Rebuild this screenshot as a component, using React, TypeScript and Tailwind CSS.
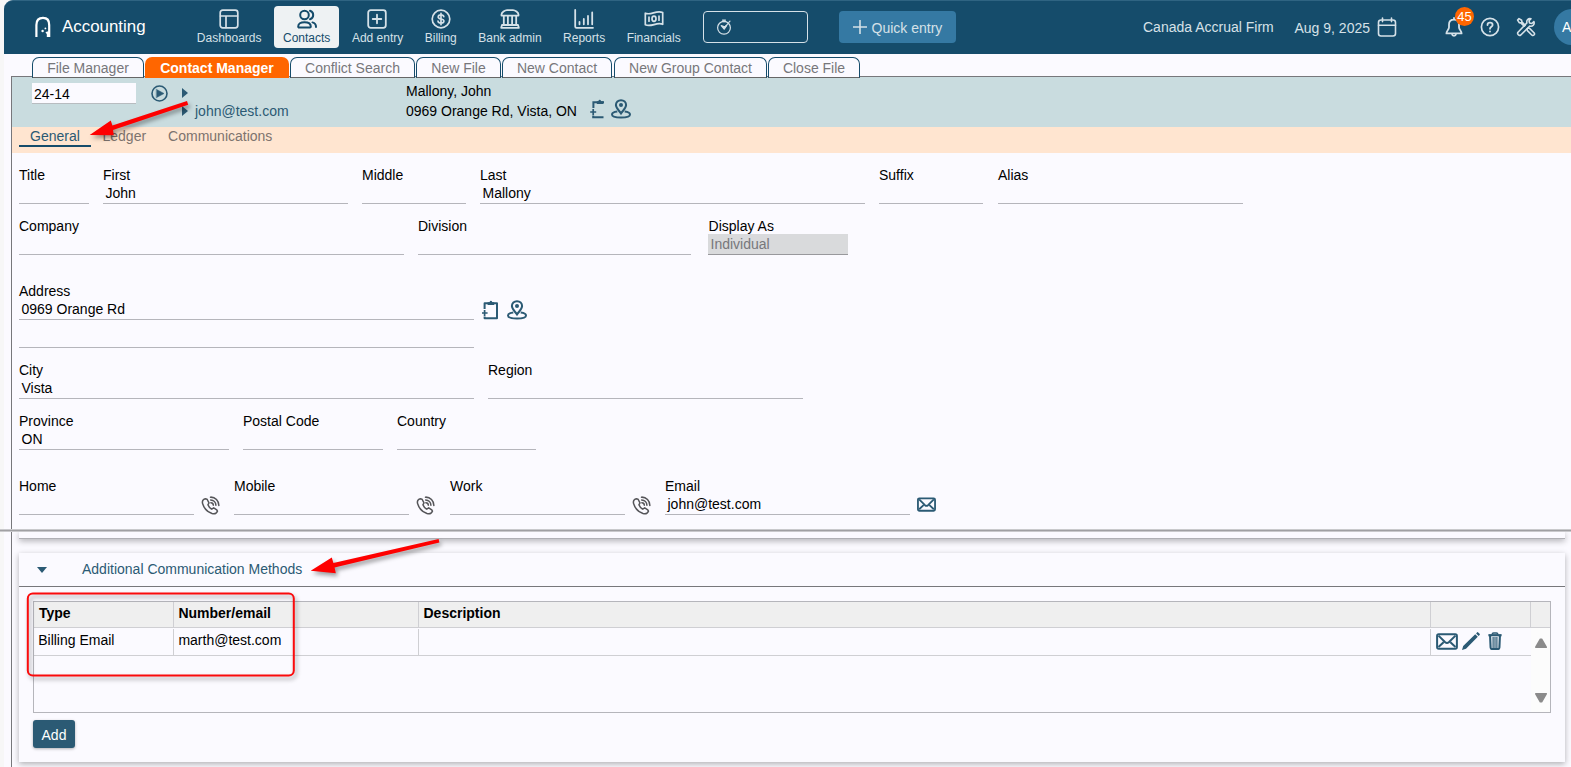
import React from "react";

type IconProps = { className?: string };

const Svg = ({ className, children, box = 20, w = 1.7 }: IconProps & { children: React.ReactNode; box?: number; w?: number }) => (
  <svg viewBox={`0 0 ${box} ${box}`} className={`shrink-0 ${className ?? ""}`} fill="none" stroke="currentColor" strokeWidth={w} strokeLinecap="round" strokeLinejoin="round">
    {children}
  </svg>
);

const DashboardIcon = () => (
  <Svg className="size-5"><rect x="1.2" y="1.2" width="17.6" height="17.6" rx="2.5" /><path d="M1.5 7H18.5M7 7V18.5" /></Svg>
);
const ContactsIcon = () => (
  <Svg className="size-5" w={2}>
    <circle cx="7.5" cy="6" r="4.3" />
    <path d="M1.2 17.6C1.2 14.6 3.6 13.2 7.5 13.2S13.8 14.6 13.8 17.6C13.8 18.2 13.4 18.6 12.9 18.6H2.1C1.6 18.6 1.2 18.2 1.2 17.6Z" />
    <path d="M13 1.8C15 2.4 16.2 4 16.2 6S15 9.6 13 10.2M15.5 13.4C17.8 14 19 15.6 19 18" />
  </Svg>
);
const AddIcon = () => (
  <Svg className="-ml-px size-5" w={1.8}><rect x="1.2" y="1.2" width="17.6" height="17.6" rx="2.5" /><path d="M10 5.7V14.3M5.7 10H14.3" /></Svg>
);
const BillingIcon = () => (
  <Svg className="size-5"><circle cx="10" cy="10" r="8.8" /><path d="M12.8 7.6C12.6 6.3 11.5 5.8 10 5.8S7.2 6.5 7.2 7.9C7.2 10.8 12.9 9.2 12.9 12C12.9 13.5 11.6 14.2 10 14.2S7.2 13.6 7 12.2M10 4.4V15.6" /></Svg>
);
const BankIcon = () => (
  <Svg className="size-5" w={1.8}>
    <path d="M1.5 5.5C1.5 3.5 5 1.2 7 1.2H13C15 1.2 18.5 3.5 18.5 5.5V6.6H1.5ZM2 16H18L18.8 18.8H1.2ZM3.8 7V15.5M7.9 7V15.5M12.1 7V15.5M16.2 7V15.5" />
  </Svg>
);
const ReportsIcon = () => (
  <Svg className="size-5" w={1.8}><path d="M1.2 1V17.5C1.2 18.3 1.7 18.8 2.5 18.8H19M5.5 13V15.3M9.8 10V15.3M14 7V15.3M18.2 3.5V15.3" /></Svg>
);
const FinancialsIcon = () => (
  <Svg className="size-5">
    <path d="M1.3 4.2C7 6.8 12 .8 18.7 3.5V15.3C12.5 12.7 7.5 18.5 1.3 15.8Z" />
    <ellipse cx="10" cy="9.7" rx="2" ry="2.6" /><path d="M5 8.2V12.2M15 7.2V11.2" />
  </Svg>
);
const TimerIcon = () => (
  <Svg className="size-4" box={16} w={1.2}>
    <circle cx="8" cy="8.8" r="6.4" /><path d="M6.5 1.2H9.5M8 1.4V3M12.8 3.4L14 2.2M8 9L12 4.6" />
    <path d="M5.2 6.6L8.6 7.8L10.6 6.6L8.2 10.2Z" fill="currentColor" />
  </Svg>
);
const CalendarIcon = () => (
  <Svg className="size-[20px]" w={1.6}><rect x="1.5" y="3" width="17" height="16" rx="2.5" /><path d="M1.5 8.2H18.5M5.5 1V4.6M14.5 1V4.6" /></Svg>
);
const BellIcon = () => (
  <Svg className="size-[20px]" w={1.8}>
    <path d="M10 2.6C6.6 2.6 5 5 5 7.6V10.2C5 12.8 2.4 13.6 2.4 16.4H17.6C17.6 13.6 15 12.8 15 10.2V7.6C15 5 13.4 2.6 10 2.6ZM8 17.2C8.3 19.4 11.7 19.4 12 17.2M10 1V2.5" />
  </Svg>
);
const HelpIcon = () => (
  <Svg className="size-[20px]"><circle cx="10" cy="10" r="8.6" /><path d="M7.5 8C7.5 4.8 12.6 4.9 12.6 7.9C12.6 9.8 10 9.7 10 11.8M10 14.3V14.5" strokeWidth="1.8" /></Svg>
);
const ToolsIcon = () => (
  <Svg className="size-[20px]" w={1.6}>
    <path d="M1.6 3L3 1.6L5.6 3.2L5.9 4.8L9.2 8.2L8.2 9.2L4.8 5.9L3.2 5.6ZM12 11L13.6 11.4L18.2 16C19.2 17.4 17.4 19.2 16 18.2L11.4 13.6L11 12Z" />
    <path d="M17.9 4.6L15.8 6.5L13.5 5.9L13 3.8L15 1.8C12.3 1 10.2 3.2 10.9 5.9L2 15.2C.8 17 3 19.2 4.8 18L13.8 9C16.5 10 19 7.3 17.9 4.6Z" />
  </Svg>
);
const ClipboardAdd = ({ className }: IconProps) => (
  <svg viewBox="0 0 18 20" className={`h-5 w-[18px] shrink-0 text-[#2b5a74] ${className ?? ""}`} fill="none" stroke="currentColor" strokeWidth="2">
    <path d="M2.6 9V3.2H15V18.2H2.6V16.4" strokeLinejoin="round" /><path d="M-.4 13H5.6M2.6 10V16" strokeWidth="1.7" />
    <path d="M5.6 5V2.2H7.4Q8.9-.6 10.4 2.2H12.2V5Z" fill="currentColor" stroke="none" />
  </svg>
);
const ClipboardPartial = ({ className }: IconProps) => (
  <svg viewBox="0 0 18 20" className={`h-5 w-[18px] shrink-0 text-[#2b5a74] ${className ?? ""}`} fill="none" stroke="currentColor" strokeWidth="2">
    <path d="M3.4 9V3.2H14M3.2 16.4V18.2H13.5" /><path d="M.2 13H6.2M3.2 10V16" strokeWidth="1.7" />
    <path d="M6.8 5V2.2H8.2Q9.7-.6 11.2 2.2H13.4V5Z" fill="currentColor" stroke="none" />
  </svg>
);
const MapPin = ({ className }: IconProps) => (
  <svg viewBox="0 0 20 20" className={`size-5 shrink-0 text-[#2b5a74] ${className ?? ""}`} fill="none" stroke="currentColor" strokeWidth="2">
    <path d="M10 14.4C8 11.4 4.9 9.2 4.9 6.1C4.9 3.1 7.1 1.3 10 1.3S15.1 3.1 15.1 6.1C15.1 9.2 12 11.4 10 14.4Z" />
    <circle cx="10" cy="6" r="2" fill="currentColor" stroke="none" />
    <path d="M6.3 12.4C3.4 12.8 1 13.9 1 15.4C1 17.4 5 18.5 10 18.5S19 17.4 19 15.4C19 13.9 16.6 12.8 13.7 12.4" />
  </svg>
);
const Phone = ({ className }: IconProps) => (
  <Svg className={`size-[19px] text-[#555559] ${className ?? ""}`} w={1.6}>
    <path d="M6.4 3.4L4.5 2.9C2.1 3.4 1 5.4 1.7 8C3 12.7 7 16.8 11.6 18.4C14.2 19.2 16.4 18.2 17.3 16L16.6 14.6L13.4 12.5L11.3 13.8C9.4 12.9 8 11.3 7.3 9.3L8.4 7.2Z" />
    <path d="M10 1.2C15 1 18.9 5 18.8 10M10.2 4.2C13.2 4.4 15.7 6.7 15.7 9.8M10.4 7.1C12 7.2 12.9 8.3 13 9.6" />
  </Svg>
);
const Mail = ({ className, w = 2 }: IconProps & { w?: number }) => (
  <svg viewBox="0 0 22 17" className={`shrink-0 text-[#2b5a74] ${className ?? ""}`} fill="none" stroke="currentColor" strokeWidth={w} strokeLinejoin="round">
    <rect x="1.1" y="1.3" width="19.8" height="14.4" rx="1.6" />
    <path d="M2.5 2.6L9.2 9.3Q11 10.8 12.8 9.3L19.5 2.6M2.5 14L7.6 9.2M19.5 14L14.4 9.2" />
  </svg>
);

const NavItem = ({ label, icon, active }: { label: string; icon: React.ReactNode; active?: boolean }) => (
  <div className={`flex h-[42px] flex-col items-center rounded-[4px] ${active ? "w-[65px] bg-[#eef2f3] text-[#154c6b]" : "px-[8.8px] text-[#d5e1e8]"} pt-[3px]`}>
    {icon}
    <span className="mt-px text-xs leading-4 whitespace-nowrap">{label}</span>
  </div>
);

const Field = ({ label, value, className }: { label: string; value?: string; className: string }) => (
  <div className={`shrink-0 ${className}`}>
    <div className="h-[18px] leading-[18px] whitespace-nowrap">{label}</div>
    <div className="h-5 border-b border-[#b5b5bb] pl-[2.5px] leading-[18px]">{value}</div>
  </div>
);

const Tab = ({ label, className }: { label: string; className: string }) => (
  <div className={`h-[21px] shrink-0 rounded-t-[7px] border border-[#154c6b] border-b-[#666] bg-[#fbfaff] text-center leading-[21px] text-[#77777b] ${className}`}>{label}</div>
);

const Arrows = () => (
  <svg className="pointer-events-none absolute inset-0 h-[767px] w-[1571px]" viewBox="0 0 1571 767">
    <g fill="#fe0000" style={{ filter: "drop-shadow(2px 3px 2px rgba(0,0,0,.38))" }}>
      <path d="M89.7 135L110.8 120.4L112.4 125.4L187 101L188.2 104.8L113 130L113.8 135.2Z" />
      <path d="M310.7 570.8L331.8 557.6L333.4 563L438.6 538.9L439.4 542.5L334.6 567.6L335.8 573.2Z" />
    </g>
    <rect x="27.8" y="593.6" width="266" height="82" rx="5" fill="none" stroke="#fb0a0c" strokeWidth="2" style={{ filter: "drop-shadow(2px 3px 2px rgba(0,0,0,.35))" }} />
  </svg>
);

export default function App() {
  return (
    <div className="relative flex h-[767px] w-[1571px] overflow-hidden bg-[#f7f7f7] pl-1 font-['Liberation_Sans',Arial,sans-serif] text-sm text-black">
      <div className="flex w-[1567px] shrink-0 flex-col rounded-tl-[9px] bg-[#fbfaff]">
        <header className="relative flex h-[54px] shrink-0 items-start overflow-hidden rounded-tl-[9px] border-t border-[#2f6482] bg-[#154c6b] text-[#d5e1e8]">
          <svg viewBox="0 0 16 21" className="mt-[15px] ml-[31px] h-[21px] w-4 shrink-0" fill="none" stroke="#fff" strokeWidth="2.2">
            <path d="M1.4 21V9C1.4 4 3.5 1.9 8 1.9S14.2 4 14.2 9V21" />
            <path d="M11.8 21V18L10.4 16.6L12 15.4H14V21Z" fill="#fff" stroke="none" />
            <circle cx="7.6" cy="15" r="1.2" fill="#fff" stroke="none" /><circle cx="10.4" cy="12.4" r=".9" fill="#fff" stroke="none" />
          </svg>
          <div className="mt-[15px] ml-[11px] w-[126px] shrink-0 text-[16.9px] leading-[22px] text-white">Accounting</div>
          <nav className="mt-[5px] flex w-[511px] shrink-0 gap-[3.9px]">
            <NavItem label="Dashboards" icon={<DashboardIcon />} />
            <NavItem label="Contacts" icon={<ContactsIcon />} active />
            <NavItem label="Add entry" icon={<AddIcon />} />
            <NavItem label="Billing" icon={<BillingIcon />} />
            <NavItem label="Bank admin" icon={<BankIcon />} />
            <NavItem label="Reports" icon={<ReportsIcon />} />
            <NavItem label="Financials" icon={<FinancialsIcon />} />
          </nav>
          <div className="mt-[10px] ml-1 flex h-8 w-[105px] shrink-0 items-center rounded-[4px] border border-[#d5e1e8] pl-3"><TimerIcon /></div>
          <div className="mt-[10px] ml-[31px] flex h-8 w-[117px] shrink-0 items-center rounded-[4px] bg-[#3579a3] pl-[14px]">
            <Svg className="size-[14px]" box={14} w={1.6}><path d="M7 .5V13.5M.5 7H13.5" /></Svg>
            <span className="mt-0.5 ml-[4.5px] leading-4 whitespace-nowrap">Quick entry</span>
          </div>
          <span className="mt-[18px] ml-[187px] w-[151.5px] shrink-0 leading-4 whitespace-nowrap">Canada Accrual Firm</span>
          <span className="mt-[19px] w-[82.5px] shrink-0 leading-4 whitespace-nowrap">Aug 9, 2025</span>
          <span className="mt-[16px] w-[67px] shrink-0"><CalendarIcon /></span>
          <span className="relative mt-[16px] w-[36px] shrink-0"><BellIcon />
            <span className="absolute -top-[10px] left-[11px] flex size-[19px] items-center justify-center rounded-full bg-[#ff6600] text-[13px] leading-none text-white">45</span>
          </span>
          <span className="mt-[16px] w-[36px] shrink-0"><HelpIcon /></span>
          <span className="mt-[16px] w-[38px] shrink-0"><ToolsIcon /></span>
          <span className="mt-2 size-9 shrink-0 rounded-full bg-[#3579a3] pl-2 leading-9 text-white">A</span>
        </header>

        <div className="z-10 flex h-[24px] shrink-0 pt-[3px] pl-7">
          <Tab label="File Manager" className="w-[112px]" />
          <div className="ml-px h-[21px] w-[144px] shrink-0 rounded-t-[7px] bg-[#ff6600] text-center leading-[23px] font-bold text-white">Contact Manager</div>
          <Tab label="Conflict Search" className="ml-px w-[125px]" />
          <Tab label="New File" className="ml-px w-[85px]" />
          <Tab label="New Contact" className="ml-px w-[110px]" />
          <Tab label="New Group Contact" className="ml-[2px] w-[153px]" />
          <Tab label="Close File" className="ml-px w-[92px]" />
        </div>

        <main className="-mt-[2px] ml-[7px] flex h-[691px] shrink-0 flex-col border-t border-l border-[#77777b]">
          <div className="flex h-[50px] shrink-0 bg-[#c9dcdf]">
            <div className="mt-[6px] ml-5 h-[21px] w-[104px] shrink-0 border-b border-[#b8bcc0] bg-[#fbfaff] pl-[2px] leading-[22px]">24-14</div>
            <Svg className="mt-[8px] ml-[15px] size-[17px] text-[#2b5a74]" box={17} w={1.6}><circle cx="8.5" cy="8.5" r="7.5" /><path d="M5.6 4.4L13 8.5L5.6 12.6Z" fill="currentColor" strokeWidth=".5" /></Svg>
            <div className="ml-[14px] flex w-[224px] shrink-0 flex-col text-[#2b5a74]">
              <svg viewBox="0 0 6 10" className="mt-[11px] h-[10px] w-[6px]" fill="currentColor"><path d="M0 0L6 5L0 10Z" /></svg>
              <div className="mt-[5px] flex items-center"><svg viewBox="0 0 6 10" className="h-[10px] w-[6px]" fill="currentColor"><path d="M0 0L6 5L0 10Z" /></svg><span className="ml-[7px] leading-4">john@test.com</span></div>
            </div>
            <div className="w-[184px] shrink-0 pt-[4px] leading-5 whitespace-nowrap"><div>Mallony, John</div><div>0969 Orange Rd, Vista, ON</div></div>
            <ClipboardPartial className="mt-[22px]" />
            <MapPin className="mt-[22px] ml-[3px]" />
          </div>
          <div className="flex h-[26px] shrink-0 bg-[#ffe5d0] pl-[7px] leading-[19px] text-[#7d736e]">
            <div className="h-5 w-[72px] border-b-2 border-[#154c6b] text-center text-[#2b5a74]">General</div>
            <div className="ml-[11.5px]">Ledger</div>
            <div className="ml-[22px]">Communications</div>
          </div>

          <section className="flex h-[376px] shrink-0 flex-col pt-[13px] pl-[7px]">
            <div className="flex">
              <Field label="Title" className="w-[70px]" />
              <Field label="First" value="John" className="ml-[14px] w-[245px]" />
              <Field label="Middle" className="ml-[14px] w-[104px]" />
              <Field label="Last" value="Mallony" className="ml-[14px] w-[385px]" />
              <Field label="Suffix" className="ml-[14px] w-[104px]" />
              <Field label="Alias" className="ml-[15px] w-[244.5px]" />
            </div>
            <div className="mt-[13px] flex">
              <Field label="Company" className="w-[385px]" />
              <Field label="Division" className="ml-[14px] w-[273px]" />
              <div className="ml-[17px] w-[140px]">
                <div className="h-[17px] pl-[.6px] leading-[18px]">Display As</div>
                <div className="h-[21px] border-b border-[#98989c] bg-[#d9dadc] pl-[2.5px] leading-5 text-[#77777b]">Individual</div>
              </div>
            </div>
            <div className="mt-[27px] flex">
              <Field label="Address" value="0969 Orange Rd" className="w-[455px]" />
              <ClipboardAdd className="mt-[18px] ml-[8px]" />
              <MapPin className="mt-[18px] ml-[7px]" />
            </div>
            <div className="h-[28px] w-[455px] border-b border-[#b5b5bb]" />
            <div className="mt-[13px] flex">
              <Field label="City" value="Vista" className="w-[455px]" />
              <Field label="Region" className="ml-[14px] w-[315px]" />
            </div>
            <div className="mt-[13px] flex">
              <Field label="Province" value="ON" className="w-[210px]" />
              <Field label="Postal Code" className="ml-[14px] w-[140px]" />
              <Field label="Country" className="ml-[14px] w-[139px]" />
            </div>
            <div className="mt-[27px] flex">
              <Field label="Home" className="w-[175px]" />
              <Phone className="mt-[18.5px] ml-[7px]" />
              <Field label="Mobile" className="ml-[14px] w-[175px]" />
              <Phone className="mt-[18.5px] ml-[7px]" />
              <Field label="Work" className="ml-[15px] w-[175px]" />
              <Phone className="mt-[18.5px] ml-[7px]" />
              <Field label="Email" value="john@test.com" className="ml-[14px] w-[245px]" />
              <Mail className="mt-[20px] ml-[7px] h-[15px] w-[19px]" w={2.1} />
            </div>
          </section>

          <div className="-ml-[15px] h-[3px] shrink-0 border-y border-[#c9c9cc] bg-[#a0a0a3]" />
          <section className="flex h-[235px] shrink-0 flex-col overflow-hidden pl-[7px]">
            <div className="h-[7px] w-[1546px] shrink-0 border-b border-[#b0b0b5] shadow-[0_2px_6px_rgba(0,0,0,0.3)]" />
            <div className="mt-[14px] h-[209px] w-[1546px] shrink-0 bg-[#fbfaff] shadow-[0_2px_6px_rgba(0,0,0,0.3)]">
              <div className="flex h-[34px] items-center border-b border-[#77777b] text-[#2b5a74]">
                <svg viewBox="0 0 10 6" className="ml-[18px] h-[6px] w-[10px]" fill="currentColor"><path d="M0 0H10L5 6Z" /></svg>
                <span className="-mt-px ml-[35px]">Additional Communication Methods</span>
              </div>
              <div className="mt-[14px] ml-[14px] flex h-[112px] w-[1518px] flex-col border border-[#b5b5bb]">
                <div className="flex h-[26px] shrink-0 border-b border-[#cfcfd3] bg-[#efefef] leading-[23px] font-bold">
                  <div className="w-[140px] border-r border-[#cfcfd3] pl-[5px]">Type</div>
                  <div className="w-[245px] border-r border-[#cfcfd3] pl-[4.4px]">Number/email</div>
                  <div className="w-[1012px] border-r border-[#cfcfd3] pl-[4.5px]">Description</div>
                  <div className="w-[100px] border-r border-[#cfcfd3]" />
                </div>
                <div className="flex grow">
                  <div className="w-[1497px]">
                    <div className="flex h-[28px] border-b border-[#cfcfd3] pt-px leading-[22px]">
                      <div className="w-[140px] border-r border-[#cfcfd3] pl-[4.2px]">Billing Email</div>
                      <div className="w-[245px] border-r border-[#cfcfd3] pl-[4.4px]">marth@test.com</div>
                      <div className="w-[1012px] border-r border-[#cfcfd3]" />
                      <div className="flex pt-[3px] pl-[5px] text-[#2b5a74]">
                        <Mail className="mt-px h-[17px] w-[22px]" />
                        <svg viewBox="0 0 18 18" className="ml-[4px] size-[18px]" fill="currentColor"><path d="M0 18L1.2 14L13.2 2.2L15.8 4.8L4 16.8ZM14.1 1.4L15.2.3Q15.7-.1 16.2.4L17.6 1.8Q18.1 2.4 17.6 2.9L16.6 3.9Z" /></svg>
                        <svg viewBox="0 0 14 18" className="ml-[8px] h-[18px] w-[14px]" fill="none" stroke="currentColor"><path d="M.4 3.2H13.6" strokeWidth="2.2" /><path d="M4.2 2.5Q4.3 1 5.5 1H8.5Q9.7 1 9.8 2.5" strokeWidth="1.6" /><path d="M2.1 4L2.6 15.5Q2.7 17 4 17H10Q11.3 17 11.4 15.5L11.9 4" strokeWidth="2.1" /><path d="M5.1 5V16.5M8.9 5V16.5" strokeWidth="1.2" /><path d="M7 5V16.5" strokeWidth="1.2" /></svg>
                      </div>
                    </div>
                  </div>
                  <div className="flex grow flex-col items-center justify-between bg-[#fcfcfc] pt-[10px] pb-[9px] text-[#8b8b8b]">
                    <svg viewBox="0 0 12 10" className="h-[10px] w-3" fill="currentColor" stroke="currentColor" strokeWidth="1.6" strokeLinejoin="round"><path d="M.8 9.2L5.4 1.2H6.6L11.2 9.2Z" /></svg>
                    <svg viewBox="0 0 12 10" className="h-[10px] w-3" fill="currentColor" stroke="currentColor" strokeWidth="1.6" strokeLinejoin="round"><path d="M.8.8L5.4 8.8H6.6L11.2.8Z" /></svg>
                  </div>
                </div>
              </div>
              <button className="mt-[7px] ml-[14px] block h-7 w-[42px] rounded-[3px] bg-[#2b5a74] pt-[2px] text-white shadow-[0_1px_3px_rgba(0,0,0,0.3)]">Add</button>
            </div>
          </section>
        </main>
      </div>
      <Arrows />
    </div>
  );
}
